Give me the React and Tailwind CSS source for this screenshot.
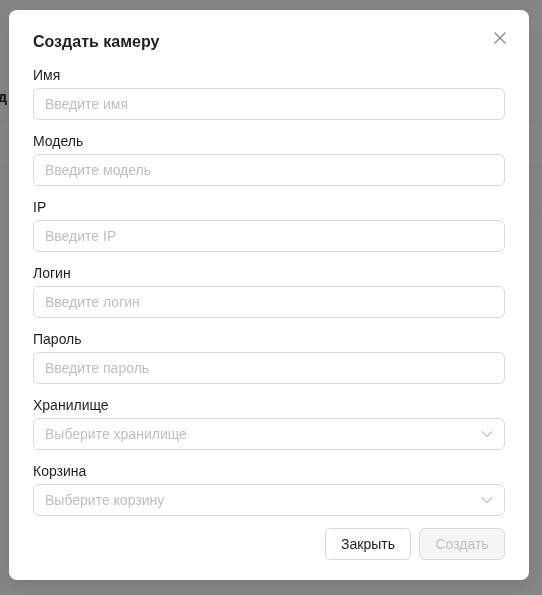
import React from 'react';

const fields = [
    { label: 'Имя', placeholder: 'Введите имя' },
    { label: 'Модель', placeholder: 'Введите модель' },
    { label: 'IP', placeholder: 'Введите IP' },
    { label: 'Логин', placeholder: 'Введите логин' },
    { label: 'Пароль', placeholder: 'Введите пароль' },
];

const selects = [
    { label: 'Хранилище', placeholder: 'Выберите хранилище' },
    { label: 'Корзина', placeholder: 'Выберите корзину' },
];

const Chevron = () => (
    <svg width="12" height="12" viewBox="0 0 12 12" fill="none">
        <path d="M1 3.5 L6 8.5 L11 3.5" stroke="#bfbfbf" strokeWidth="1.1" />
    </svg>
);

const App = () => {
    return (
        <div className="relative w-[542px] h-[595px] overflow-hidden bg-white font-['Liberation_Sans',Arial,sans-serif] text-[14px] text-[#1f1f1f]">
            {/* table behind the mask */}
            <div className="pt-[86px] -ml-[19px]">
                <div className="h-[37px] border-b border-[#f0f0f0] leading-[22px] font-bold">Код</div>
                <div className="h-[45px] border-b border-[#f0f0f0] pt-[7px] leading-[22px] text-[#1677ff]">1:</div>
                <div className="h-[45px] border-b border-[#f0f0f0] pt-[8px] leading-[22px] text-[#1677ff]">2:</div>
            </div>

            <div className="fixed inset-0 bg-black/[0.48] flex justify-start items-start pt-[10px] pl-[9px]">
                <div className="relative w-[520px] bg-white rounded-[8px] shadow-[0_6px_16px_rgba(0,0,0,0.08),0_3px_6px_-4px_rgba(0,0,0,0.12)] px-[24px] pt-[20px] pb-[20px]">
                    <button className="absolute right-[18px] top-[17px] w-[22px] h-[22px] flex items-center justify-center">
                        <svg width="14" height="14" viewBox="0 0 14 14" fill="none">
                            <path d="M1.5 1.5 L12.5 12.5 M12.5 1.5 L1.5 12.5" stroke="#8c8c8c" strokeWidth="1.4" />
                        </svg>
                    </button>
                    <h2 className="text-[16px] leading-[24px] font-bold mb-[10px]">Создать камеру</h2>

                    <div className="flex flex-col gap-[10px]">
                        {fields.map(f => (
                            <div key={f.label} className="flex flex-col gap-[2px]">
                                <label className="leading-[22px]">{f.label}</label>
                                <input
                                    placeholder={f.placeholder}
                                    className="h-[32px] px-[11px] border border-[#d9d9d9] rounded-[6px] outline-none placeholder:text-[#bfbfbf]"
                                />
                            </div>
                        ))}
                        {selects.map(s => (
                            <div key={s.label} className="flex flex-col gap-[2px]">
                                <label className="leading-[22px]">{s.label}</label>
                                <div className="h-[32px] pl-[11px] pr-[11px] border border-[#d9d9d9] rounded-[6px] flex items-center justify-between">
                                    <span className="text-[#bfbfbf]">{s.placeholder}</span>
                                    <Chevron />
                                </div>
                            </div>
                        ))}
                    </div>

                    <div className="flex justify-end gap-[8px] mt-[12px]">
                        <button className="h-[32px] w-[86px] border border-[#d9d9d9] rounded-[6px] bg-white text-[#1f1f1f]">
                            Закрыть
                        </button>
                        <button disabled className="h-[32px] w-[86px] border border-[#d9d9d9] rounded-[6px] bg-[#f5f5f5] text-[#bfbfbf]">
                            Создать
                        </button>
                    </div>
                </div>
            </div>
        </div>
    );
};

export default App;
